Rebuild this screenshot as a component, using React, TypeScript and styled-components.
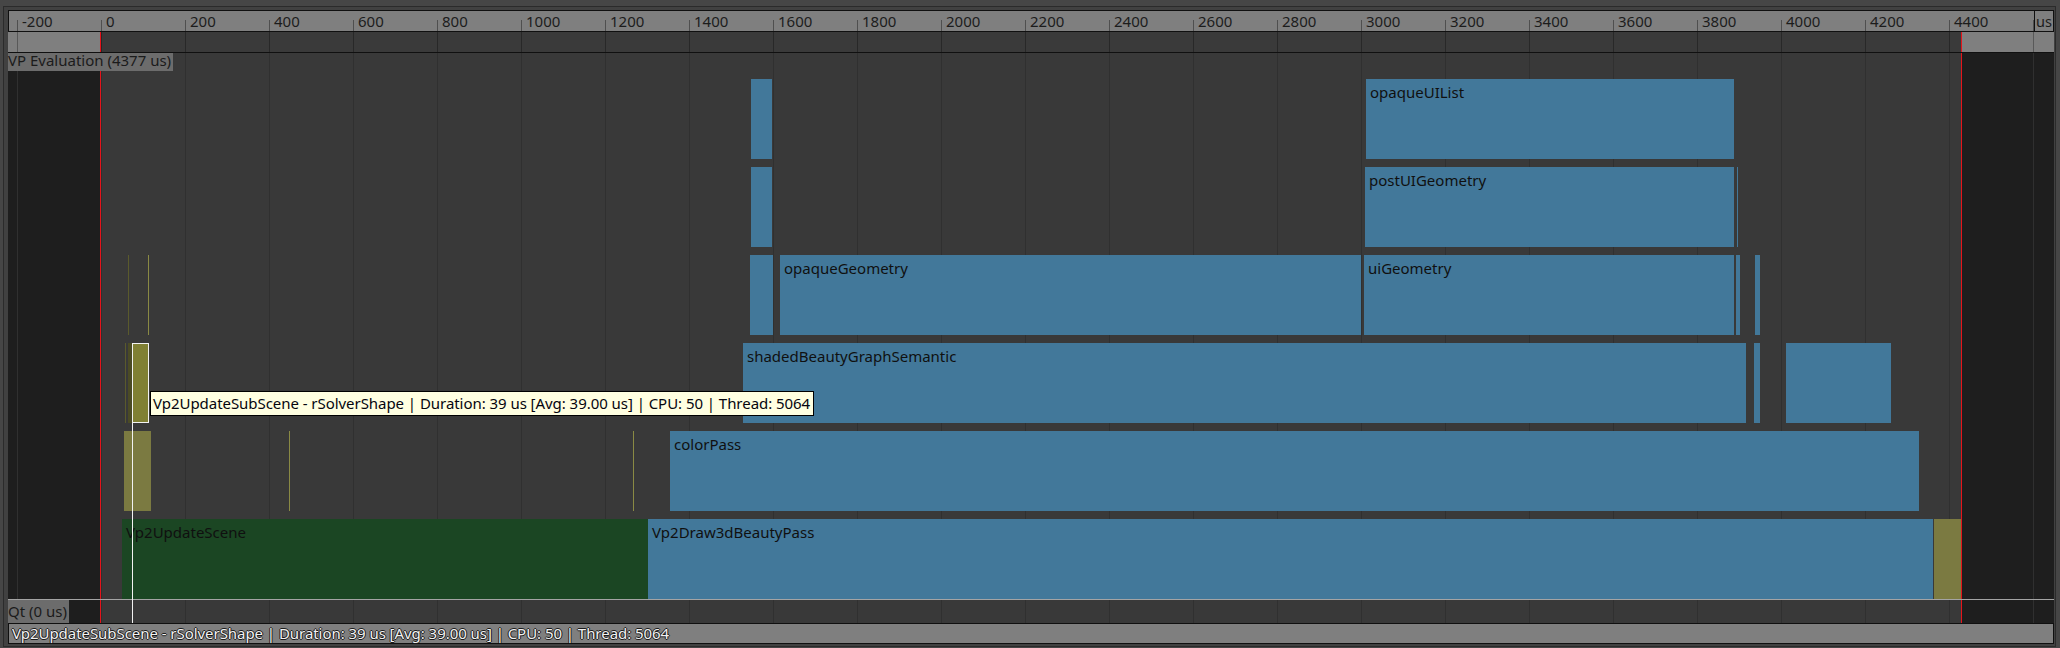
import React from "react";
import styled, { createGlobalStyle, css } from "styled-components";

const FONT = `"Noto Sans", "Open Sans", "DejaVu Sans", sans-serif`;
const RED = "#e5141b";
const ORIGIN_X = 8; // page x of the track's left edge
const ZERO = 92; // track x of the 0 us line
const END = 1953; // track x of the end-of-evaluation line
const TICK_PX = 84; // px per 200 us
const TICK_OFFSET = 9; // track x of the -200 tick

const GlobalStyle = createGlobalStyle`
  *, *::before, *::after { box-sizing: border-box; }
  html, body { margin: 0; padding: 0; background: #464646; }
  body { font-family: ${FONT}; font-size: 15px; }
`;

const trackBg = (inside: string, outside: string, grid: string) => css`
  background-image: linear-gradient(
      to right,
      transparent ${ZERO}px,
      ${RED} ${ZERO}px,
      ${RED} ${ZERO + 1}px,
      transparent ${ZERO + 1}px,
      transparent ${END}px,
      ${RED} ${END}px,
      ${RED} ${END + 1}px,
      transparent ${END + 1}px
    ),
    linear-gradient(to right, ${grid} 1px, transparent 1px),
    linear-gradient(
      to right,
      ${outside} ${ZERO}px,
      ${inside} ${ZERO}px,
      ${inside} ${END}px,
      ${outside} ${END}px
    );
  background-size: 100% 100%, ${TICK_PX}px 100%, 100% 100%;
  background-position: 0 0, ${TICK_OFFSET}px 0, 0 0;
  background-repeat: no-repeat, repeat-x, no-repeat;
`;

const Window = styled.div`
  width: 2060px;
  height: 648px;
  padding: 6px 4px 1px 3px;
  background: #464646;
  overflow: hidden;
`;

const Panel = styled.div`
  height: 641px;
  border: 1px solid #2b2b2b;
  background: #414141;
  padding: 3px 1px 2px 4px;
  display: flex;
  flex-direction: column;
`;

const RulerRow = styled.div`
  display: flex;
  flex: none;
  height: 22px;
  border-top: 1px solid #101010;
  border-bottom: 1px solid #101010;
  border-left: 1px solid #101010;
`;

const Ruler = styled.div`
  flex: 1;
  display: flex;
  overflow: hidden;
  padding-left: 8px;
  background: #7f7f7f;
`;

const Tick = styled.div`
  flex: none;
  width: ${TICK_PX}px;
  height: 20px;
  padding-left: 5px;
  line-height: 20px;
  color: #1c1c1c;
  white-space: nowrap;
  background: linear-gradient(#4f4f4f, #4f4f4f) no-repeat left bottom / 1px 11px;
`;

const UnitCell = styled.div`
  flex: none;
  width: 20px;
  height: 20px;
  padding-left: 1px;
  line-height: 20px;
  font-size: 14.5px;
  color: #1c1c1c;
  background: #7f7f7f;
  border-left: 1px solid #101010;
  border-right: 1px solid #101010;
`;

const FrameTrack = styled.div`
  flex: none;
  height: 21px;
  border-bottom: 1px solid #101010;
  ${trackBg("#3a3a3a", "#7f7f7f", "rgba(0,0,0,0.3)")}
`;

const Timeline = styled.div`
  position: relative;
  flex: none;
  display: flex;
  flex-direction: column;
`;

const MainTrack = styled.div`
  position: relative;
  flex: none;
  height: 546px;
  display: flex;
  flex-direction: column;
  ${trackBg("#393939", "#1e1e1e", "#303030")}
`;

const TrackLabel = styled.div<{ $tall?: boolean }>`
  align-self: flex-start;
  flex: none;
  height: ${(p) => (p.$tall ? 23 : 18)}px;
  line-height: ${(p) => (p.$tall ? 23 : 15)}px;
  padding: 0 2px ${(p) => (p.$tall ? 0 : 3)}px 0;
  background: #6c6c6c;
  color: #1b1b1b;
  white-space: nowrap;
`;

const Lanes = styled.div`
  display: flex;
  flex-direction: column;
  gap: 8px;
  margin-top: 8px;
`;

const Lane = styled.div`
  position: relative;
  flex: none;
  height: 80px;
`;

type Kind = "blue" | "green" | "olive" | "dark" | "line" | "lineDim" | "selected";

const kindColor: Record<Kind, string> = {
  blue: "#42789a",
  green: "#1b4623",
  olive: "#7b7a41",
  dark: "#4b4b25",
  line: "#8a8a44",
  lineDim: "#5a5a2c",
  selected: "#808034",
};

const BarBox = styled.div<{ $kind: Kind }>`
  position: absolute;
  top: 0;
  bottom: 0;
  overflow: hidden;
  background: ${(p) => kindColor[p.$kind]};
  ${(p) =>
    p.$kind === "selected" &&
    css`
      border: 1px solid #f2f2f2;
      z-index: 1;
    `}
`;

const BarLabel = styled.div`
  padding: 3px 4px 0;
  line-height: 20px;
  color: #101010;
  white-space: nowrap;
`;

const Tooltip = styled.div`
  position: absolute;
  left: 142px;
  top: 338px;
  z-index: 3;
  height: 25px;
  padding: 0 3px 0 2px;
  line-height: 23px;
  letter-spacing: -0.05px;
  border: 1px solid #000;
  background: #ffffe1;
  color: #05050f;
  white-space: nowrap;
`;

const CursorLine = styled.div`
  position: absolute;
  left: 124px;
  top: 370px;
  width: 1px;
  height: 200px;
  background: #f2f2f2;
  z-index: 2;
`;

const Separator = styled.div`
  flex: none;
  height: 1px;
  background: #a4a4a4;
`;

const QtTrack = styled.div`
  flex: none;
  height: 23px;
  display: flex;
  ${trackBg("#393939", "#1e1e1e", "#303030")}
`;

const StatusBar = styled.div`
  flex: none;
  height: 21px;
  padding-left: 3px;
  line-height: 19px;
  letter-spacing: -0.05px;
  border: 1px solid #101010;
  background: #7f7f7f;
  color: #f2f2f2;
  white-space: nowrap;
  text-shadow: 1px 0 0 #1a1a1a, -1px 0 0 #1a1a1a, 0 1px 0 #1a1a1a, 0 -1px 0 #1a1a1a;
`;

type Bar = [number, number, Kind, string?];

// page x coordinates [start, end)
const lanes: Bar[][] = [
  [
    [751, 772, "blue"],
    [1366, 1734, "blue", "opaqueUIList"],
  ],
  [
    [751, 772, "blue"],
    [1365, 1734, "blue", "postUIGeometry"],
    [1737, 1738, "blue"],
  ],
  [
    [128, 129, "lineDim"],
    [148, 149, "line"],
    [750, 773, "blue"],
    [780, 1361, "blue", "opaqueGeometry"],
    [1364, 1734, "blue", "uiGeometry"],
    [1736, 1740, "blue"],
    [1755, 1760, "blue"],
  ],
  [
    [125, 126, "lineDim"],
    [128, 132, "dark"],
    [132, 149, "selected"],
    [743, 1746, "blue", "shadedBeautyGraphSemantic"],
    [1754, 1760, "blue"],
    [1786, 1891, "blue"],
  ],
  [
    [124, 151, "olive"],
    [289, 290, "line"],
    [633, 634, "line"],
    [670, 1919, "blue", "colorPass"],
  ],
  [
    [122, 648, "green", "Vp2UpdateScene"],
    [648, 1933, "blue", "Vp2Draw3dBeautyPass"],
    [1934, 1961, "olive"],
  ],
];

// -200 .. 4600; the last tick sits under the unit cell edge and carries no label
const ticks = Array.from({ length: 25 }, (_, i) => -200 + i * 200);
const LAST_LABELED = 4400;

const INFO =
  "Vp2UpdateSubScene - rSolverShape | Duration: 39 us [Avg: 39.00 us] | CPU: 50 | Thread: 5064";

export default function App() {
  return (
    <>
      <GlobalStyle />
      <Window>
        <Panel>
          <RulerRow>
            <Ruler>
              {ticks.map((t) => (
                <Tick key={t}>{t <= LAST_LABELED ? t : null}</Tick>
              ))}
            </Ruler>
            <UnitCell>us</UnitCell>
          </RulerRow>
          <FrameTrack />
          <Timeline>
            <MainTrack>
              <TrackLabel>VP Evaluation (4377 us)</TrackLabel>
              <Lanes>
                {lanes.map((bars, i) => (
                  <Lane key={i}>
                    {bars.map(([x0, x1, kind, label], j) => (
                      <BarBox
                        key={j}
                        $kind={kind}
                        style={{ left: x0 - ORIGIN_X, width: x1 - x0 }}
                      >
                        {label && <BarLabel>{label}</BarLabel>}
                      </BarBox>
                    ))}
                  </Lane>
                ))}
              </Lanes>
              <Tooltip>{INFO}</Tooltip>
            </MainTrack>
            <Separator />
            <QtTrack>
              <TrackLabel $tall>Qt (0 us)</TrackLabel>
            </QtTrack>
            <CursorLine />
          </Timeline>
          <StatusBar>{INFO}</StatusBar>
        </Panel>
      </Window>
    </>
  );
}
